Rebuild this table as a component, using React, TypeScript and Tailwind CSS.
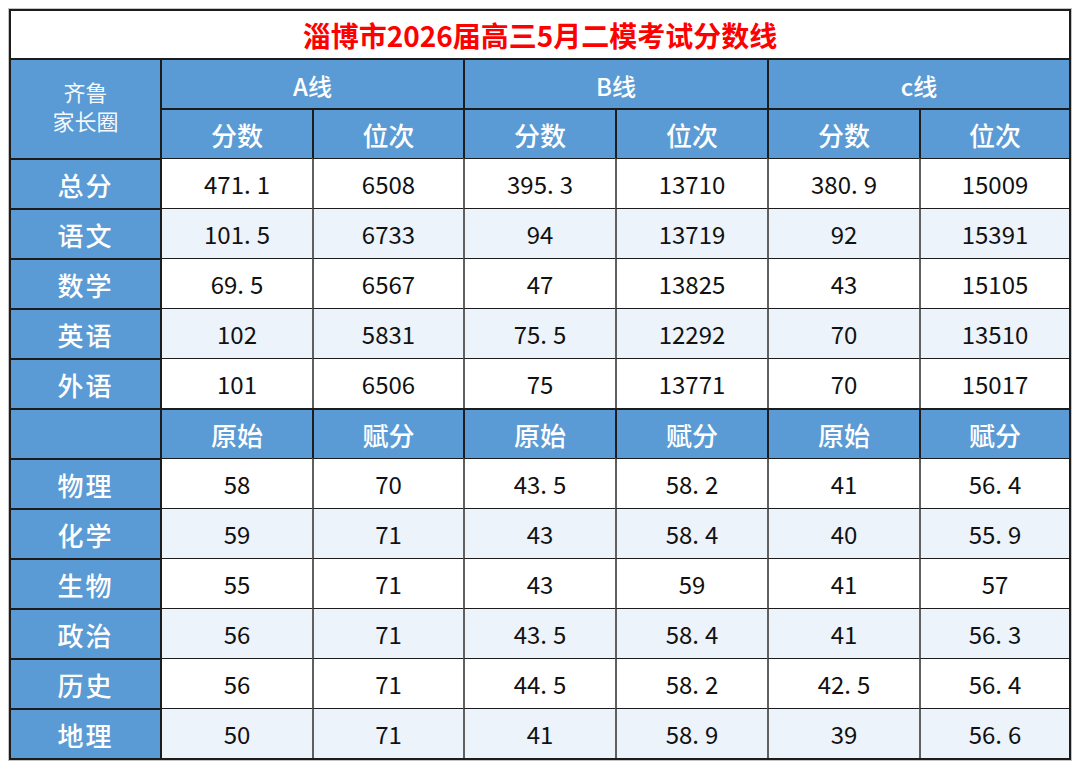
const cjk = "font-['Noto_Sans_CJK_SC','Noto_Sans',sans-serif]";

const topRows: [string, string[]][] = [
  ["总分", ["471.1", "6508", "395.3", "13710", "380.9", "15009"]],
  ["语文", ["101.5", "6733", "94", "13719", "92", "15391"]],
  ["数学", ["69.5", "6567", "47", "13825", "43", "15105"]],
  ["英语", ["102", "5831", "75.5", "12292", "70", "13510"]],
  ["外语", ["101", "6506", "75", "13771", "70", "15017"]],
];

const bottomRows: [string, string[]][] = [
  ["物理", ["58", "70", "43.5", "58.2", "41", "56.4"]],
  ["化学", ["59", "71", "43", "58.4", "40", "55.9"]],
  ["生物", ["55", "71", "43", "59", "41", "57"]],
  ["政治", ["56", "71", "43.5", "58.4", "41", "56.3"]],
  ["历史", ["56", "71", "44.5", "58.2", "42.5", "56.4"]],
  ["地理", ["50", "71", "41", "58.9", "39", "56.6"]],
];

// the source font draws the decimal point wide, so pad it a little
function Num({ value }: { value: string }) {
  const [whole, frac] = value.split(".");
  if (frac === undefined) return <>{value}</>;
  return (
    <>
      {whole}
      <span className="mr-[6px]">.</span>
      {frac}
    </>
  );
}

function HeadCell({ children, first = false }: { children?: React.ReactNode; first?: boolean }) {
  return (
    <td
      className={`h-[50px] border-t-2 border-t-[#1c1c1c] bg-[#5b9bd5] text-center align-middle text-[26px] font-medium text-white ${
        first ? "" : "border-l-2 border-l-[#1c1c1c]"
      }`}
    >
      {children}
    </td>
  );
}

function DataRows({ rows }: { rows: [string, string[]][] }) {
  return (
    <>
      {rows.map(([label, values], i) => (
        <tr key={label}>
          <td className="h-[50px] border-t-2 border-t-[#1c1c1c] bg-[#5b9bd5] text-center align-middle text-[26px] font-medium tracking-[2px] text-white">
            {label}
          </td>
          {values.map((v, j) => (
            <td
              key={j}
              className={`h-[50px] border-t-[1.5px] border-t-[#1c1c1c] text-center align-middle text-[24px] text-[#111] ${
                j === 0 ? "border-l-2 border-l-[#1c1c1c]" : "border-l-2 border-l-[#606060]"
              } ${i % 2 === 1 ? "bg-[#edf3fa]" : "bg-white"}`}
            >
              <Num value={v} />
            </td>
          ))}
        </tr>
      ))}
    </>
  );
}

export default function App() {
  return (
    <div className={`min-h-[769px] w-[1080px] bg-white pl-[8px] pt-[8px] ${cjk}`}>
      <div className="w-fit border border-[#c4c4c4]">
        <table className="w-[1062px] table-fixed border-separate border-spacing-0 border-2 border-[#1c1c1c]">
          <colgroup>
            <col className="w-[149px]" />
            <col className="w-[152px]" />
            <col className="w-[151px]" />
            <col className="w-[152px]" />
            <col className="w-[152px]" />
            <col className="w-[152px]" />
            <col className="w-[150px]" />
          </colgroup>
          <tbody>
            <tr>
              <td colSpan={7} className="h-[47px] text-center align-middle text-[28px] font-bold text-[#ff0000]">
                淄博市2026届高三5月二模考试分数线
              </td>
            </tr>
            <tr>
              <td
                rowSpan={2}
                className="border-t-2 border-t-[#1c1c1c] bg-[#5b9bd5] pb-[6px] text-center align-middle text-[22px] leading-[29px] text-white/95"
              >
                <div>齐鲁</div>
                <div>家长圈</div>
              </td>
              <td colSpan={2} className="h-[50px] border-l-2 border-t-2 border-[#1c1c1c] bg-[#5b9bd5] pt-[4px] text-center align-middle text-[24px] font-medium text-white">
                A线
              </td>
              <td colSpan={2} className="h-[50px] border-l-2 border-t-2 border-[#1c1c1c] bg-[#5b9bd5] pt-[4px] text-center align-middle text-[24px] font-medium text-white">
                B线
              </td>
              <td colSpan={2} className="h-[50px] border-l-2 border-t-2 border-[#1c1c1c] bg-[#5b9bd5] pt-[4px] text-center align-middle text-[24px] font-medium text-white">
                c线
              </td>
            </tr>
            <tr>
              <HeadCell>分数</HeadCell>
              <HeadCell>位次</HeadCell>
              <HeadCell>分数</HeadCell>
              <HeadCell>位次</HeadCell>
              <HeadCell>分数</HeadCell>
              <HeadCell>位次</HeadCell>
            </tr>
            <DataRows rows={topRows} />
            <tr>
              <HeadCell first />
              <HeadCell>原始</HeadCell>
              <HeadCell>赋分</HeadCell>
              <HeadCell>原始</HeadCell>
              <HeadCell>赋分</HeadCell>
              <HeadCell>原始</HeadCell>
              <HeadCell>赋分</HeadCell>
            </tr>
            <DataRows rows={bottomRows} />
          </tbody>
        </table>
      </div>
    </div>
  );
}
